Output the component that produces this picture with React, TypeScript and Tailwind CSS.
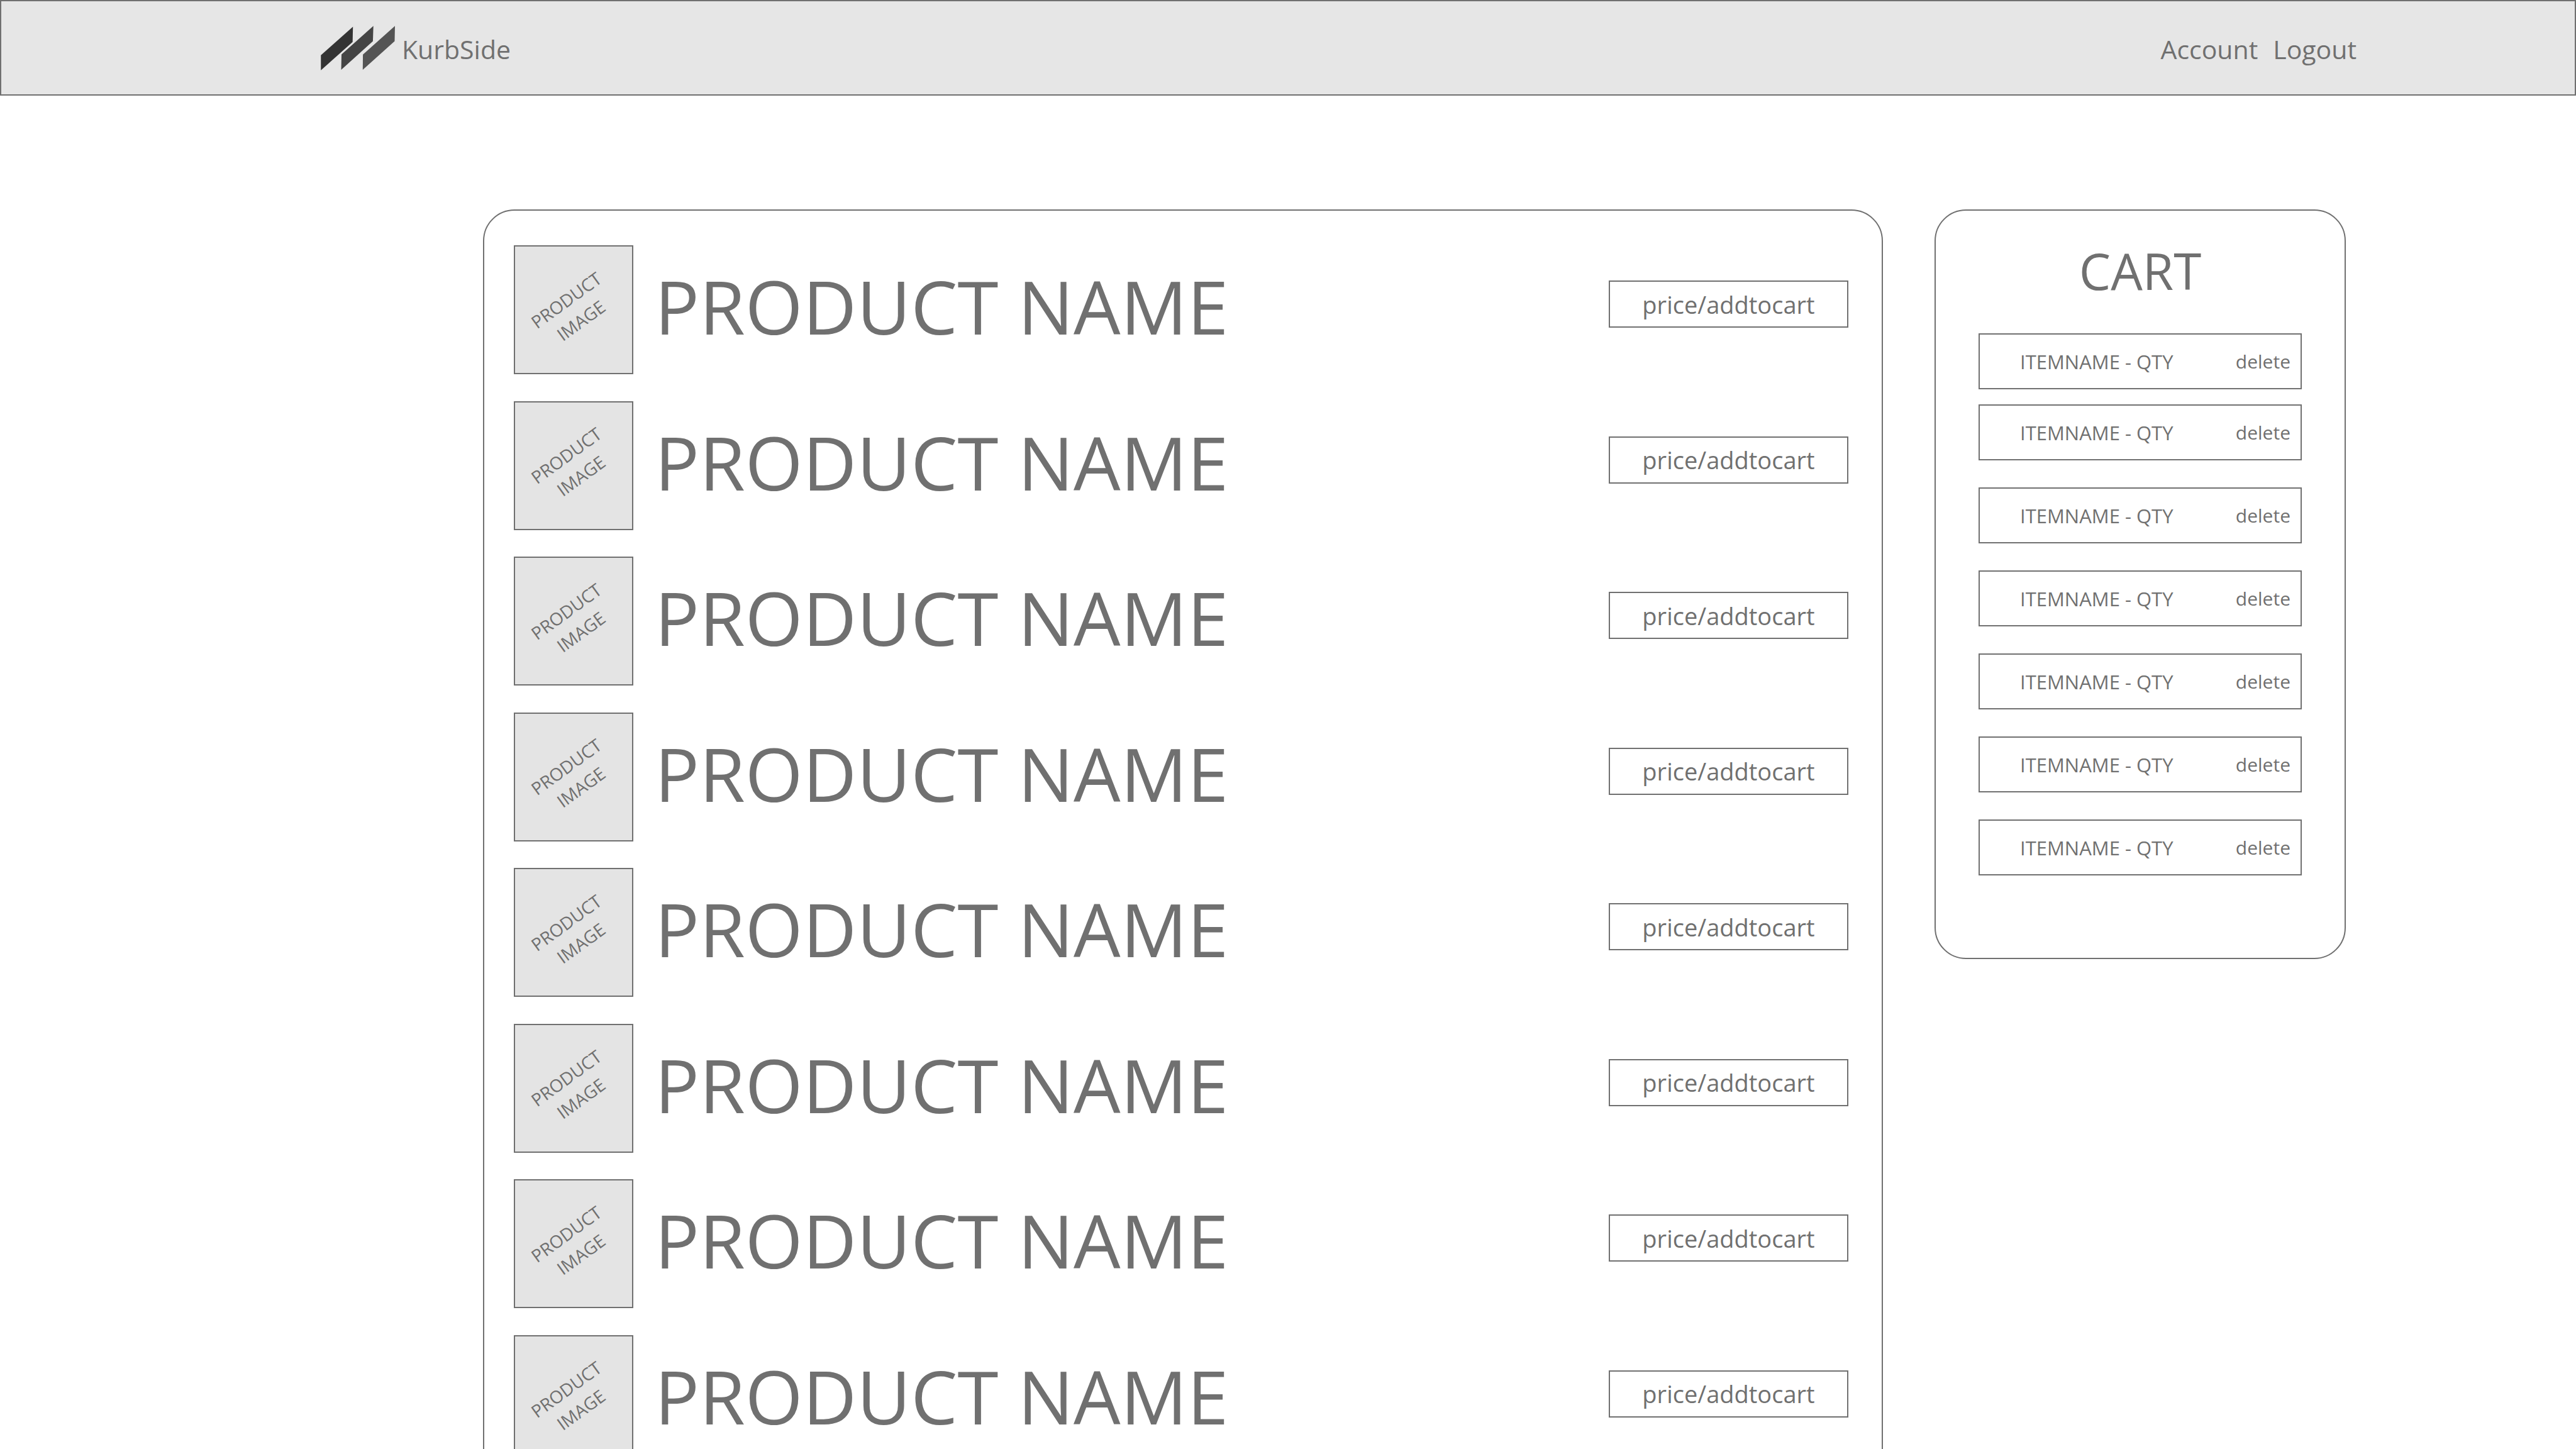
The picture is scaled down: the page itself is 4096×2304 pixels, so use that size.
const products = Array.from({ length: 8 }, (_, id) => ({ id, name: "PRODUCT NAME" }));
const cartItems = Array.from({ length: 7 }, (_, id) => ({ id, label: "ITEMNAME - QTY" }));

function Logo() {
  return (
    <svg viewBox="132 158 461 276" className="h-[71px] w-[118px]" aria-hidden="true">
      <polygon points="332,163 330,258 133,434 133,340" fill="#333333" />
      <polygon points="459,158 456,253 259,431 261,335" fill="#444444" />
      <polygon points="593,158 591,253 393,431 394,336" fill="#545454" />
    </svg>
  );
}

function Header() {
  return (
    <header className="flex h-[152px] shrink-0 items-center justify-between border-2 border-[#707070] bg-[#e6e6e6] pr-[347px] pl-[508px] text-[41px] leading-[56px]">
      <a href="#" className="flex items-center gap-[11px]">
        <Logo />
        <span className="pt-1">KurbSide</span>
      </a>
      <nav className="flex gap-6 pt-1">
        <a href="#account">Account</a>
        <a href="#logout">Logout</a>
      </nav>
    </header>
  );
}

function ProductRow({ name }: { name: string }) {
  return (
    <li className="flex items-start">
      <div className="flex h-[205px] w-[190px] shrink-0 items-center justify-center border-2 border-[#707070] bg-[#e4e4e4]">
        <p className="-rotate-36 text-center text-[28px] leading-10">
          PRODUCT
          <br />
          IMAGE
        </p>
      </div>
      <h2 className="ml-[34px] flex-1 text-[118px] leading-[194px] whitespace-nowrap">{name}</h2>
      <button
        type="button"
        className="mt-14 h-[75px] w-[381px] shrink-0 border-2 border-[#707070] bg-white text-[38px] leading-[52px]"
      >
        price/addtocart
      </button>
    </li>
  );
}

function Cart() {
  return (
    <aside className="w-[654px] shrink-0 rounded-[50px] border-2 border-[#707070] px-[68px] pt-[45px] pb-[131px]">
      <h2 className="text-center text-[80px] leading-[100px]">CART</h2>
      <ul className="mt-[50px]">
        {cartItems.map(({ id, label }) => (
          <li
            key={id}
            className="mt-[43px] flex h-[89px] items-center justify-between border-2 border-[#707070] pr-4 pl-16 text-[31px] leading-[42px] first:mt-0 nth-2:mt-6"
          >
            <span>{label}</span>
            <button type="button" className="text-[30px] leading-[42px]">
              delete
            </button>
          </li>
        ))}
      </ul>
    </aside>
  );
}

export default function App() {
  return (
    <div className="flex h-screen flex-col overflow-hidden bg-white font-['Open_Sans','Noto_Sans',sans-serif] text-[#707070]">
      <Header />
      <main className="flex items-start gap-[82px] pt-[181px] pr-[366px] pl-[768px]">
        <section className="flex-1 rounded-[50px] border-2 border-[#707070] pt-[55px] pr-[53px] pl-[47px]">
          <ul className="grid h-[1980px] grid-rows-8">
            {products.map(({ id, name }) => (
              <ProductRow key={id} name={name} />
            ))}
          </ul>
        </section>
        <Cart />
      </main>
    </div>
  );
}
